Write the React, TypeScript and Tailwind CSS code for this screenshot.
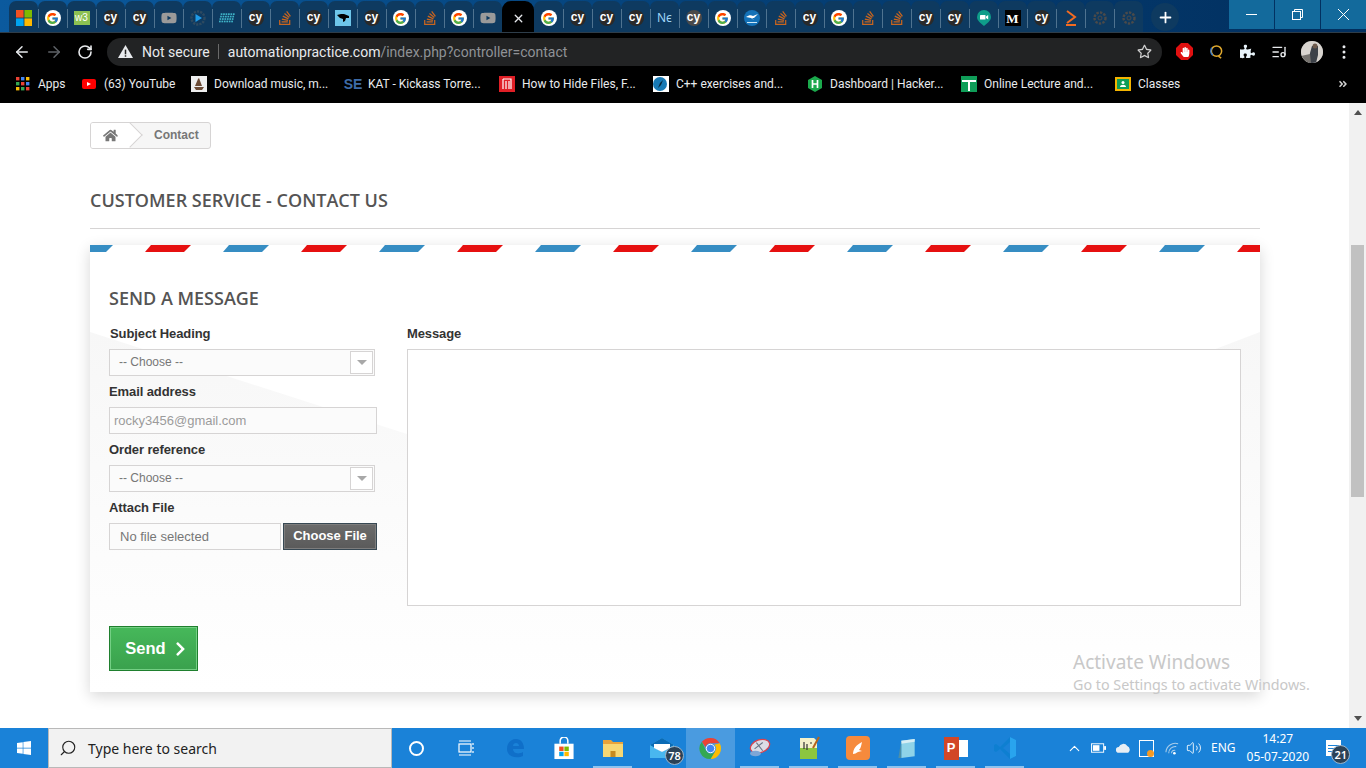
import React from "react";
import { FcGoogle } from "react-icons/fc";
import { FaHome, FaChevronRight, FaStackOverflow, FaYoutube, FaPuzzlePiece, FaHandPaper, FaRegStar, FaWindows, FaAngleDoubleRight } from "react-icons/fa";
import { ArrowLeft, ArrowRight, RotateCw, X, Plus, Search, ChevronUp, Volume2, MoreVertical, ListMusic } from "lucide-react";

const ui = "font-['Noto_Sans','Open_Sans',sans-serif]";
const chrome = "font-['Roboto','Noto_Sans',sans-serif]";

function Cy({ grey }: { grey?: boolean }) {
  return (
    <span className={`flex h-4 w-4 items-center justify-center rounded-full ${grey ? "bg-[#4a4a4a]" : "bg-[#2a2a2a]"} font-['Liberation_Sans',sans-serif] text-[12px] leading-none font-bold text-white pb-[2px]`}>
      cy
    </span>
  );
}
function G() {
  return (
    <span className="flex h-4 w-4 items-center justify-center rounded-full bg-white">
      <FcGoogle className="h-[13px] w-[13px]" />
    </span>
  );
}
function So() {
  return <FaStackOverflow className="h-4 w-4 text-[#c8651f]" />;
}
function Yt() {
  return <FaYoutube className="h-4 w-4 text-[#9a9a9a]" />;
}
function GearPlay() {
  return (
    <svg viewBox="0 0 16 16" className="h-4 w-4">
      <circle cx="8" cy="8" r="6.5" fill="none" stroke="#2e4a60" strokeWidth="2.4" strokeDasharray="2.2 1" />
      <path d="M5.5 4l6.5 4-6.5 4z" fill="#1e9be8" />
    </svg>
  );
}
function Dots() {
  const c = [];
  for (let r = 0; r < 4; r++) for (let i = 0; i < 6; i++) c.push(<rect key={`${r}${i}`} x={i * 2.6 + (3 - r) * 0.6} y={3 + r * 2.6} width="1.8" height="1.8" fill="#3fb4c8" />);
  return <svg viewBox="0 0 17 16" className="h-4 w-4">{c}</svg>;
}
function GearDim() {
  return (
    <svg viewBox="0 0 16 16" className="h-4 w-4">
      <circle cx="8" cy="8" r="5.5" fill="none" stroke="#4a4a4a" strokeWidth="2.4" strokeDasharray="2.4 1.2" />
      <circle cx="8" cy="8" r="2" fill="none" stroke="#4a4a4a" strokeWidth="1" />
    </svg>
  );
}

const before: React.ReactNode[] = [
  <svg viewBox="0 0 16 16" className="h-4 w-4" key="ms">
    <rect width="7.6" height="7.6" fill="#f25022" /><rect x="8.4" width="7.6" height="7.6" fill="#7fba00" />
    <rect y="8.4" width="7.6" height="7.6" fill="#00a4ef" /><rect x="8.4" y="8.4" width="7.6" height="7.6" fill="#ffb900" />
  </svg>,
  <G />,
  <span className="flex h-[14px] w-4 items-center justify-center bg-[#8cc152] font-['Liberation_Sans',sans-serif] text-[10px] leading-none text-white">w3</span>,
  <Cy />, <Cy />, <Yt />, <GearPlay />, <Dots />, <Cy />, <So />, <Cy />,
  <svg viewBox="0 0 16 16" className="h-4 w-4"><rect width="16" height="16" fill="#6ec6ea" /><path d="M2 5l4-1 3 0 5 2 0 2-3 0-1 3-2 1 0-3-3-1z" fill="#000" /></svg>,
  <Cy />, <G />, <So />, <G />, <Yt />,
];
const after: React.ReactNode[] = [
  <G />, <Cy />, <Cy />, <Cy />,
  <span className="font-['Noto_Sans',sans-serif] text-[12px] leading-none text-[#9fd4f5]">Nє</span>,
  <Cy grey />, <G />,
  <svg viewBox="0 0 16 16" className="h-4 w-4"><circle cx="8" cy="8" r="8" fill="#1472b8" /><path d="M2 7c3-2 5-2 7-1l5-2-4 4-2 0 2 2-3-2z" fill="#fff" /><path d="M3 12h10v1H3z" fill="#cfe8f7" /></svg>,
  <So />, <Cy />, <G />, <So />, <So />, <Cy />, <Cy />,
  <svg viewBox="0 0 16 16" className="h-4 w-4"><path d="M8 0a7 7 0 0 1 7 7c0 4-4 6-7 9-3-3-7-5-7-9a7 7 0 0 1 7-7z" fill="#0f9d8a" /><rect x="4" y="5" width="5.5" height="4.5" rx="0.6" fill="#fff" /><path d="M10 6.5l2.2-1.5v4.5L10 8z" fill="#fff" /></svg>,
  <span className="flex h-4 w-4 items-center justify-center bg-black font-['Liberation_Serif',serif] text-[13px] leading-none font-bold text-white">M</span>,
  <Cy />,
  <svg viewBox="0 0 16 16" className="h-4 w-4"><path d="M4 1l8 6-8 6" fill="none" stroke="#f26b21" strokeWidth="2" /><rect x="3" y="14" width="10" height="2" fill="#f26b21" /></svg>,
  <GearDim />, <GearDim />,
];

function Tab({ children, first }: { children: React.ReactNode; first?: boolean }) {
  return (
    <div className="flex h-full w-[29px] items-center justify-center rounded-t-[7px] bg-[#0e3a60] pt-[3px] relative">
      {!first && <span className="absolute left-0 top-[8px] h-[19px] w-px bg-[#4f7390]" />}
      {children}
    </div>
  );
}

function Bookmark({ icon, label, w }: { icon: React.ReactNode; label: string; w: string }) {
  return (
    <div className={`flex items-center gap-[7px] ${w}`}>
      <span className="flex h-4 w-4 shrink-0 items-center justify-center">{icon}</span>
      <span className={`${chrome} whitespace-nowrap text-[12px] text-[#e8eaed]`}>{label}</span>
    </div>
  );
}

function Apps() {
  const col = ["#ea4335", "#4285f4", "#fbbc05", "#34a853", "#ea4335", "#4285f4", "#fbbc05", "#34a853", "#ea4335"];
  return (
    <svg viewBox="0 0 14 14" className="h-[14px] w-[14px]">
      {col.map((c, i) => <rect key={i} x={(i % 3) * 5} y={Math.floor(i / 3) * 5} width="3.4" height="3.4" fill={c} />)}
    </svg>
  );
}

function Select() {
  return (
    <div className="flex h-[27px] w-[266px] items-center justify-between border border-[#d6d4d4] bg-[#fbfbfb] pr-px pl-[9px]">
      <span className="pb-px text-[12px] text-[#777]">-- Choose --</span>
      <span className="flex h-[23px] w-[23px] items-center justify-center border border-[#d6d4d4] bg-white">
        <span className="h-0 w-0 border-x-[5px] border-t-[5px] border-x-transparent border-t-[#a8a8a8]" />
      </span>
    </div>
  );
}

function Stripes() {
  const p: React.ReactNode[] = [];
  for (let i = 0; i < 16; i++) {
    const x = -23 + i * 78;
    const c = i % 2 === 0 ? "#368dc3" : "#e61010";
    p.push(<polygon key={i} points={`${x},7 ${x + 6},0 ${x + 46},0 ${x + 39},7`} fill={c} />);
  }
  return <svg viewBox="0 0 1170 7" className="block h-[7px] w-full">{p}</svg>;
}

function TaskItem({ children, line, active }: { children: React.ReactNode; line?: boolean; active?: boolean }) {
  return (
    <div className={`relative flex h-full w-[49px] items-center justify-center ${active ? "bg-[#4a9be0]" : ""}`}>
      {children}
      {line && <span className="absolute bottom-0 left-[5px] h-[2px] w-[39px] bg-[#8fc3ee]" />}
    </div>
  );
}

function Badge({ n, pos }: { n: string; pos: string }) {
  return (
    <span className={`${ui} absolute ${pos} flex h-[19px] w-[19px] items-center justify-center rounded-full border border-[#9db4c8] bg-[#2b4257] text-[11px] font-semibold leading-none text-white`}>
      {n}
    </span>
  );
}

export default function App() {
  return (
    <div className="relative flex h-[768px] w-[1366px] flex-col overflow-hidden bg-white font-['Liberation_Sans',sans-serif]">
      {/* Tab strip */}
      <header className="flex h-[33px] shrink-0 items-stretch border-b border-[#2e3d4a] bg-gradient-to-r from-[#0b5a9e] via-[#05427a] to-[#022f5e] pl-[9px]">
        <div className="mt-[1px] flex">
          {before.map((b, i) => <Tab key={i} first={i === 0}>{b}</Tab>)}
          <div className="relative z-10 flex w-[32px] items-center justify-center rounded-t-[9px] bg-black pt-[3px]">
            <X className="h-[13px] w-[13px] text-[#e8eaed]" strokeWidth={2.5} />
          </div>
          {after.map((b, i) => <Tab key={i} first={i === 0}>{b}</Tab>)}
        </div>
        <div className="ml-[8px] mt-[3px] flex h-[28px] w-[28px] items-center justify-center rounded-full bg-[#0e3a60]">
          <Plus className="h-[17px] w-[17px] text-white" strokeWidth={2.5} />
        </div>
        <div className="ml-auto flex h-[29px]">
          <div className="flex w-[45px] items-center justify-center bg-[#136a9c]">
            <svg viewBox="0 0 11 11" className="h-[11px] w-[11px]"><path d="M0 5.5h11" stroke="#fff" strokeWidth="1" /></svg>
          </div>
          <div className="ml-px flex w-[45px] items-center justify-center bg-[#136a9c]">
            <svg viewBox="0 0 11 11" className="h-[11px] w-[11px]"><rect x="0.5" y="2.5" width="8" height="8" fill="none" stroke="#fff" /><path d="M2.5 2.5v-2h8v8h-2" fill="none" stroke="#fff" /></svg>
          </div>
          <div className="ml-px flex w-[45px] items-center justify-center bg-[#136a9c]">
            <svg viewBox="0 0 11 11" className="h-[11px] w-[11px]"><path d="M0 0l11 11M11 0L0 11" stroke="#fff" strokeWidth="1" /></svg>
          </div>
        </div>
      </header>

      {/* Toolbar */}
      <div className="flex h-[37px] shrink-0 items-center bg-black pl-[13px]">
        <ArrowLeft className="h-[18px] w-[18px] text-[#e8eaed]" strokeWidth={2} />
        <ArrowRight className="ml-[14px] h-[18px] w-[18px] text-[#5f6368]" strokeWidth={2} />
        <RotateCw className="ml-[14px] h-[16px] w-[16px] text-[#e8eaed]" strokeWidth={2.4} />
        <div className="ml-[14px] flex h-[28px] w-[1055px] items-center rounded-full bg-[#222324] pl-[11px] pr-[10px]">
          <svg viewBox="0 0 16 16" className="h-[15px] w-[15px] shrink-0"><path d="M8 1L16 15H0z" fill="#e8eaed" /><rect x="7.2" y="6" width="1.6" height="5" fill="#222" /><rect x="7.2" y="12" width="1.6" height="1.6" fill="#222" /></svg>
          <span className={`${chrome} ml-[9px] pt-px text-[14px] text-[#e8eaed]`}>Not secure</span>
          <span className="ml-[8px] h-[15px] w-px bg-[#6a6a6a]" />
          <span className={`${chrome} ml-[9px] pt-px text-[14px] text-[#e8eaed]`}>automationpractice.com<span className="text-[#8f9296]">/index.php?controller=contact</span></span>
          <FaRegStar className="ml-auto h-[15px] w-[15px] text-[#d0d0d0]" />
        </div>
        <span className="ml-[14px] flex h-[17px] w-[17px] items-center justify-center bg-[#e01010] [clip-path:polygon(30%_0,70%_0,100%_30%,100%_70%,70%_100%,30%_100%,0_70%,0_30%)]"><FaHandPaper className="h-[10px] w-[10px] text-white" /></span>
        <svg viewBox="0 0 16 16" className="ml-[16px] h-[15px] w-[15px]"><circle cx="8" cy="7.5" r="5.5" fill="none" stroke="#e0a92e" strokeWidth="1.6" /><path d="M3 4a6 6 0 0 0 1 8" fill="none" stroke="#3b7fd4" strokeWidth="1.6" /><path d="M10 13l3 2" stroke="#e0a92e" strokeWidth="1.6" /></svg>
        <FaPuzzlePiece className="ml-[16px] h-[15px] w-[15px] text-[#e8f3fa]" />
        <ListMusic className="ml-[16px] h-[16px] w-[16px] text-[#e8eaed]" />
        <span className="ml-[14px] flex h-[22px] w-[22px] items-center justify-center overflow-hidden rounded-full bg-[#8a8a8a]">
          <svg viewBox="0 0 22 22" className="h-[22px] w-[22px]"><rect width="22" height="22" fill="#d8d4cf" /><path d="M11 5h6v9l-2 8H8l1-10z" fill="#3c4148" /><circle cx="14" cy="5" r="2.5" fill="#6d5a4c" /><path d="M0 15l9-2 1 9H0z" fill="#76736f" /></svg>
        </span>
        <MoreVertical className="ml-[12px] h-[18px] w-[18px] text-[#e8eaed]" />
      </div>

      {/* Bookmarks */}
      <div className="flex h-[33px] shrink-0 items-center bg-black pb-[5px] pl-[15px] pr-[16px]">
        <Bookmark w="w-[66px]" icon={<Apps />} label="Apps" />
        <Bookmark w="w-[110px]" icon={<span className="flex h-[10px] w-[14px] items-center justify-center rounded-[2px] bg-[#f00]"><span className="h-0 w-0 border-y-[2.5px] border-l-[4px] border-y-transparent border-l-white" /></span>} label="(63) YouTube" />
        <Bookmark w="w-[154px]" icon={<svg viewBox="0 0 16 16" className="h-4 w-4"><rect width="16" height="16" fill="#eee" /><path d="M3 11l10 0-2 3H5zM7 3l1-1 3 8H4z" fill="#6b4a35" /></svg>} label="Download music, m..." />
        <Bookmark w="w-[154px]" icon={<span className="text-[14px] leading-none font-bold text-[#3e6ca8]">SE</span>} label="KAT - Kickass Torre..." />
        <Bookmark w="w-[154px]" icon={<svg viewBox="0 0 16 16" className="h-4 w-4"><rect width="16" height="16" fill="#e01f26" /><path d="M4 3h8v10M4 3v10M7 5v8M10 5v8" fill="none" stroke="#fff" strokeWidth="1.2" /></svg>} label="How to Hide Files, F..." />
        <Bookmark w="w-[154px]" icon={<svg viewBox="0 0 16 16" className="h-4 w-4"><rect width="16" height="16" fill="#fff" /><circle cx="7" cy="8" r="7" fill="#1779b4" /><path d="M10 4L8 9 5 12l2-5z" fill="#06283d" /></svg>} label="C++ exercises and..." />
        <Bookmark w="w-[154px]" icon={<svg viewBox="0 0 16 16" className="h-4 w-4"><path d="M8 0l7 4v8l-7 4-7-4V4z" fill="#1ba94c" /><path d="M5.5 4v8M10.5 4v8M5.5 8h5" stroke="#fff" strokeWidth="1.7" /></svg>} label="Dashboard | Hacker..." />
        <Bookmark w="w-[154px]" icon={<svg viewBox="0 0 16 16" className="h-4 w-4"><rect width="16" height="16" fill="#0f9d58" /><path d="M1 5h14M8 5v10" stroke="#fff" strokeWidth="2" /></svg>} label="Online Lecture and..." />
        <Bookmark w="w-auto" icon={<svg viewBox="0 0 16 16" className="h-4 w-4"><rect width="16" height="14" y="1" fill="#f4b400" /><rect x="2" y="3" width="12" height="10" fill="#0f9d58" /><circle cx="8" cy="6.5" r="1.5" fill="#fff" /><path d="M5 11c0-3 6-3 6 0z" fill="#fff" /></svg>} label="Classes" />
        <FaAngleDoubleRight className="ml-auto mr-[2px] h-[10px] w-[10px] text-[#d0d0d0]" />
      </div>

      {/* Page */}
      <main className="flex min-h-0 flex-1">
        <div className="min-w-0 flex-1 pl-[90px] pr-[89px] pt-[19px]">
          {/* Breadcrumb */}
          <div className="flex h-[27px] w-[121px] items-stretch overflow-hidden rounded-[3px] border border-[#d6d4d4] bg-[#f6f6f6]">
            <div className="relative flex w-[39px] items-center justify-center bg-white">
              <FaHome className="h-[15px] w-[15px] text-[#777]" />
              <span className="absolute -right-[9px] top-[3px] h-[18px] w-[18px] rotate-45 border-r border-t border-[#d6d4d4] bg-white" />
            </div>
            <span className="ml-[24px] pb-[2px] self-center text-[12px] font-bold text-[#777]">Contact</span>
          </div>

          <h1 className="mt-[39px] font-['Open_Sans',sans-serif] text-[18px] leading-[25px] font-semibold text-[#555454]">CUSTOMER SERVICE - CONTACT US</h1>
          <div className="mt-[15px] h-px w-full bg-[#d6d4d4]" />

          {/* Card */}
          <section className="relative mt-[16px] h-[447px] bg-white shadow-[0_4px_14px_rgba(0,0,0,0.16)]">
            <svg viewBox="0 0 1170 447" className="absolute inset-0 h-full w-full">
              <defs>
                <linearGradient id="wedge" x1="0" y1="0" x2="0" y2="1">
                  <stop offset="0" stopColor="#f7f7f7" />
                  <stop offset="1" stopColor="#ffffff" />
                </linearGradient>
              </defs>
              <polygon points="0,87 320,190 1110,110 1170,87 1170,447 0,447" fill="url(#wedge)" />
            </svg>
            <div className="relative">
              <Stripes />
              <div className="pl-[19px] pr-[19px] pt-[34px]">
                <h2 className="font-['Open_Sans',sans-serif] text-[18px] leading-[25px] font-semibold text-[#555454]">SEND A MESSAGE</h2>
                <div className="mt-[14px] flex gap-[30px]">
                  <div className="w-[268px] shrink-0">
                    <label className="block pl-px text-[13px] leading-[18px] font-bold tracking-[-0.1px] text-[#333]">Subject Heading</label>
                    <div className="mt-[6px]"><Select /></div>
                    <label className="mt-[7px] block text-[13px] leading-[18px] font-bold tracking-[-0.1px] text-[#333]">Email address</label>
                    <div className="mt-[6px] flex h-[27px] items-center border border-[#d6d4d4] bg-[#fbfbfb] pl-[4px] text-[13px] text-[#9c9b9b]">rocky3456@gmail.com</div>
                    <label className="mt-[7px] block text-[13px] leading-[18px] font-bold tracking-[-0.1px] text-[#333]">Order reference</label>
                    <div className="mt-[6px]"><Select /></div>
                    <label className="mt-[7px] block text-[13px] leading-[18px] font-bold tracking-[-0.1px] text-[#333]">Attach File</label>
                    <div className="mt-[6px] flex h-[27px] gap-[2px]">
                      <div className="flex w-[172px] items-center border border-[#d6d4d4] bg-[#fbfbfb] pl-[10px] pt-px text-[13px] text-[#777]">No file selected</div>
                      <div className="flex w-[94px] items-center justify-center border border-[#374853] bg-gradient-to-b from-[#6b6b6b] to-[#5a5a5a] pb-px text-[13px] font-bold text-white shadow-[inset_0_0_0_1px_#7d7d7d]">Choose File</div>
                    </div>
                  </div>
                  <div className="min-w-0 flex-1">
                    <label className="block text-[13px] leading-[18px] font-bold tracking-[-0.1px] text-[#333]">Message</label>
                    <div className="mt-[6px] h-[257px] border border-[#d6d4d4] bg-white" />
                  </div>
                </div>
                <div className="mt-[20px] flex h-[45px] w-[89px] items-center justify-center gap-[8px] border border-[#1f7f2e] bg-gradient-to-b from-[#46b85a] to-[#3aa14d] pl-[5px] text-[16.5px] font-bold text-white shadow-[inset_0_0_0_1px_#74cf84]">
                  Send <FaChevronRight className="h-[16px] w-[13px]" />
                </div>
              </div>
            </div>
          </section>
        </div>
        {/* Scrollbar */}
        <div className="flex w-[17px] shrink-0 flex-col items-center bg-[#f1f1f1] pt-[7px]">
          <div className="h-0 w-0 border-x-[4px] border-b-[5px] border-x-transparent border-b-[#505050]" />
          <div className="mt-[130px] h-[252px] w-[13px] bg-[#c1c1c1]" />
          <div className="mt-auto mb-[7px] h-0 w-0 border-x-[4px] border-t-[5px] border-x-transparent border-t-[#505050]" />
        </div>
      </main>

      {/* Activate Windows */}
      <div className={`${ui} pointer-events-none absolute left-[1073px] top-[649px] text-[#c8c8c8]`}>
        <div className="text-[19px] leading-[26px]">Activate Windows</div>
        <div className="text-[14.3px] leading-[20px]">Go to Settings to activate Windows.</div>
      </div>

      {/* Taskbar */}
      <footer className="flex h-[40px] shrink-0 items-stretch bg-[#1a82d8] text-white">
        <div className="flex w-[48px] items-center justify-center"><FaWindows className="h-[16px] w-[16px]" /></div>
        <div className={`${ui} flex w-[344px] items-center gap-[11px] border border-[#b9b9b9] bg-[#f2f2f2] pl-[10px] text-[14px] text-[#222]`}>
          <Search className="h-[18px] w-[18px] -scale-x-100 text-[#222]" strokeWidth={1.5} />
          Type here to search
        </div>
        <div className="flex">
          <TaskItem><span className="h-[15px] w-[15px] rounded-full border-2 border-white" /></TaskItem>
          <TaskItem>
            <svg viewBox="0 0 18 18" className="h-[18px] w-[18px]"><rect x="2" y="5" width="12" height="8" fill="none" stroke="#fff" strokeWidth="1.2" /><path d="M2 2h12M2 16h12M16 4v2M16 8v2M16 12v2" stroke="#fff" strokeWidth="1.2" /></svg>
          </TaskItem>
          <TaskItem>
            <svg viewBox="0 0 20 20" className="h-[20px] w-[20px]"><path d="M2 11C2 5 6 1 11 1c5 0 8 4 8 10H8c0 4 5 6 10 3v4c-6 3-16 1-16-7zm6-3h6c0-4-6-4-6 0z" fill="#0f6fc9" /></svg>
          </TaskItem>
          <TaskItem>
            <svg viewBox="0 0 22 24" className="h-[23px] w-[22px]"><path d="M1 7h20v16H1z" fill="#fff" /><path d="M7 7V4a4 4 0 0 1 8 0v3" fill="none" stroke="#fff" strokeWidth="1.6" /><rect x="6" y="10" width="4.6" height="4.6" fill="#f25022" /><rect x="11.4" y="10" width="4.6" height="4.6" fill="#7fba00" /><rect x="6" y="15.4" width="4.6" height="4.6" fill="#00a4ef" /><rect x="11.4" y="15.4" width="4.6" height="4.6" fill="#ffb900" /></svg>
          </TaskItem>
          <TaskItem line>
            <svg viewBox="0 0 22 20" className="h-[20px] w-[22px]"><path d="M1 2h8l2 2h10v3H1z" fill="#e8a33c" /><path d="M1 6h20v13H1z" fill="#f7d774" /><rect x="8.5" y="13" width="5" height="6" fill="#c98a1f" /></svg>
          </TaskItem>
          <TaskItem>
            <svg viewBox="0 0 24 20" className="h-[20px] w-[24px]"><path d="M0 7l12-7 12 7v13H0z" fill="#49b7ef" /><path d="M0 7l12 7 12-7-12-7z" fill="#0b6bb5" /><path d="M4 6h16v4l-8 4-8-4z" fill="#fff" /></svg>
            <Badge n="78" pos="left-[28px] top-[18px]" />
          </TaskItem>
          <TaskItem active>
            <svg viewBox="0 0 24 24" className="h-[23px] w-[23px]"><path d="M12 1a11 11 0 0 1 9.6 5.6H12a5.4 5.4 0 0 0-5.2 4L3 5a11 11 0 0 1 9-4z" fill="#ea4335" /><path d="M21.6 6.6A11 11 0 0 1 12 23l4.7-8A5.4 5.4 0 0 0 16 8z" fill="#fbbc05" /><path d="M3 5a11 11 0 0 0 9 18l4.7-8a5.4 5.4 0 0 1-9.4-1z" fill="#34a853" /><circle cx="12" cy="12" r="4.4" fill="#4285f4" stroke="#fff" strokeWidth="1" /></svg>
          </TaskItem>
          <TaskItem line>
            <svg viewBox="0 0 26 22" className="h-[20px] w-[26px]"><ellipse cx="13" cy="9" rx="11" ry="7" fill="#dcdde6" stroke="#d6434f" strokeWidth="1.4" transform="rotate(-20 13 9)" /><path d="M7 12l9-7M9 5l7 9" stroke="#6a7588" strokeWidth="1.2" /><ellipse cx="8" cy="17" rx="6" ry="3" fill="#7ea6d6" /></svg>
          </TaskItem>
          <TaskItem line>
            <svg viewBox="0 0 22 24" className="h-[24px] w-[22px]"><path d="M2 2h14l3 3v18H2z" fill="#f4f1c9" /><rect x="2" y="12" width="17" height="11" fill="#8cc63f" /><path d="M6 6v7M9 8v6M12 7h2" stroke="#333" strokeWidth="1.2" /><path d="M15 12l6-11" stroke="#b5651d" strokeWidth="2" /></svg>
          </TaskItem>
          <TaskItem line>
            <span className="flex h-[24px] w-[24px] items-center justify-center rounded-[4px] bg-[#f68a3c]">
              <svg viewBox="0 0 16 16" className="h-[16px] w-[16px]"><path d="M3 14c0-5 3-9 9-12-1 4-1 6-3 8l3 1-4 1c-2 1-3 2-5 2z" fill="#fff" /></svg>
            </span>
          </TaskItem>
          <TaskItem line>
            <svg viewBox="0 0 22 24" className="h-[23px] w-[22px]"><path d="M5 4l14-2v18L5 22z" fill="#8fd3e8" /><path d="M5 4l14-2v3L5 7z" fill="#d7eef5" /><path d="M2 22l3-18v18z" fill="#4d90a8" /></svg>
          </TaskItem>
          <TaskItem line>
            <span className="relative flex h-[23px] w-[24px]">
              <span className="absolute right-0 top-[3px] h-[17px] w-[16px] bg-white" />
              <span className="absolute left-0 top-0 flex h-[23px] w-[15px] items-center justify-center bg-[#d24726] font-['Liberation_Sans',sans-serif] text-[13px] font-bold">P</span>
            </span>
          </TaskItem>
          <TaskItem line>
            <svg viewBox="0 0 24 24" className="h-[24px] w-[24px]"><path d="M17 1l6 3v16l-6 3L7 13l-4 3-2-1V9l2-1 4 3z" fill="#0e7fd1" /><path d="M17 6L10 12l7 6z" fill="#1a82d8" /><path d="M17 1l6 3v16l-6 3z" fill="#29a4ee" /></svg>
          </TaskItem>
        </div>
        <div className={`${ui} ml-[37px] flex flex-1 items-center`}>
          <ChevronUp className="h-[17px] w-[17px]" strokeWidth={1.5} />
          <svg viewBox="0 0 16 10" className="ml-[8px] h-[10px] w-[15px]"><rect x="0.5" y="0.5" width="13" height="9" fill="none" stroke="#fff" /><rect x="2" y="2" width="7" height="6" fill="#fff" /><rect x="14" y="3" width="2" height="4" fill="#fff" /></svg>
          <svg viewBox="0 0 18 12" className="ml-[9px] h-[12px] w-[17px]"><path d="M4 11a3 3 0 0 1 0-6 5 5 0 0 1 9-1 4 4 0 0 1 1 7z" fill="#e8eef4" /></svg>
          <span className="relative ml-[7px] flex h-[17px] w-[15px] items-center justify-center border border-white text-[8px]">
            <span className="absolute -bottom-[1px] -right-[1px] h-[7px] w-[7px] rounded-full bg-[#f59a23]" />
          </span>
          <svg viewBox="0 0 18 16" className="ml-[10px] h-[15px] w-[17px]"><path d="M2 12a10 10 0 0 1 13-9M5 13a7 7 0 0 1 8-7M8 13a3 3 0 0 1 4-3" fill="none" stroke="#a9cdea" strokeWidth="1.1" /><circle cx="11" cy="13" r="1.4" fill="#fff" /></svg>
          <Volume2 className="ml-[5px] h-[16px] w-[16px]" strokeWidth={1.3} />
          <span className="ml-[9px] text-[12px]">ENG</span>
          <div className="ml-[11px] flex flex-col items-center text-[12px] leading-[18px]">
            <span>14:27</span>
            <span>05-07-2020</span>
          </div>
          <span className="relative ml-[17px] flex h-[16px] w-[15px] flex-col justify-center gap-[2px] bg-white px-[2px]">
            <span className="h-px bg-[#1a82d8]" /><span className="h-px bg-[#1a82d8]" /><span className="h-px bg-[#1a82d8]" />
            <Badge n="21" pos="left-[5px] top-[5px]" />
          </span>
        </div>
      </footer>
    </div>
  );
}
